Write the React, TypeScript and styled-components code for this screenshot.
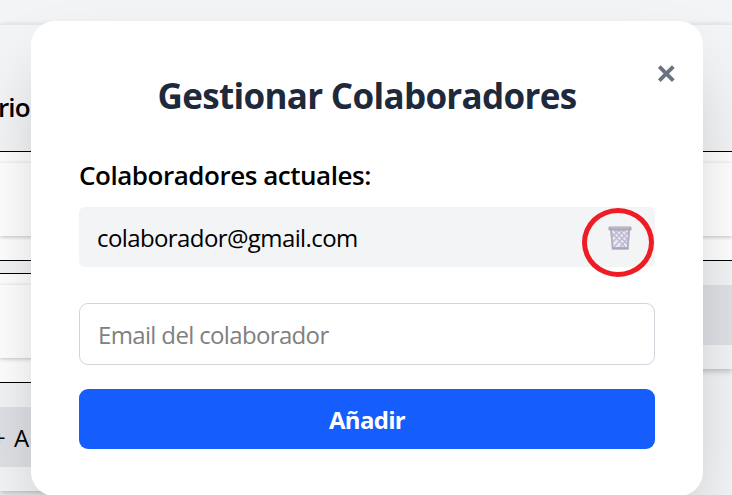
import React from "react";
import styled, { createGlobalStyle } from "styled-components";

const GlobalStyle = createGlobalStyle`
  *, *::before, *::after { box-sizing: border-box; }
  body { margin: 0; overflow: hidden; font-family: "Open Sans", "Noto Sans", sans-serif; color: #000; }
  h2, h3 { margin: 0; }
  button, input { font: inherit; }
`;

const Page = styled.div`
  position: relative;
  width: 732px;
  height: 495px;
  overflow: hidden;
  background: #f3f4f6;
`;

const Board = styled.div`
  display: flex;
  justify-content: space-between;
  height: 100%;
`;

const Column = styled.section<{ $height: number }>`
  width: 366px;
  height: ${(p) => p.$height}px;
  margin-top: 24px;
  border-top: 1px solid #e4e5e8;
  background: #f3f4f6;
  box-shadow: 0 2px 6px rgba(0, 0, 0, 0.24);
`;

const ColumnTitle = styled.h3`
  height: 126px;
  padding-top: 64px;
  margin-left: -2px;
  font-size: 26px;
  line-height: 36px;
  font-weight: 600;
  letter-spacing: -0.9px;
`;

const Slot = styled.div`
  height: 110px;
  padding: 11px 0 23px;
  border: solid #000;
  border-width: 1px 0;
  margin-bottom: 12px;
  background: #fff;
`;

const Card = styled.div`
  height: 73px;
  background: #fff;
  box-shadow: 0 1px 4px rgba(0, 0, 0, 0.24);
`;

const AddCard = styled.div<{ $gap: number }>`
  height: 60px;
  margin-top: ${(p) => p.$gap}px;
  padding-left: 14px;
  text-indent: -22px;
  word-spacing: 2px;
  background: #dfe1e6;
  font-size: 24px;
  line-height: 61px;
  white-space: pre;
`;

const Modal = styled.div`
  position: absolute;
  left: 31px;
  top: 21px;
  width: 672px;
  height: 475px;
  padding: 48px;
  border-radius: 24px;
  background: #fff;
  box-shadow: 0 37px 75px -18px rgba(0, 0, 0, 0.25);
`;

const CloseButton = styled.button`
  position: absolute;
  top: 44px;
  right: 28px;
  width: 18px;
  height: 18px;
  padding: 0;
  border: 0;
  background: none;
  svg { display: block; }
`;

const Title = styled.h2`
  height: 54px;
  color: #1e293b;
  font-size: 35px;
  line-height: 54px;
  font-weight: 700;
  text-align: center;
  white-space: nowrap;
  letter-spacing: -0.68px;
`;

const Subtitle = styled.h3`
  height: 36px;
  margin-top: 34px;
  font-size: 26px;
  line-height: 36px;
  font-weight: 600;
  white-space: nowrap;
  letter-spacing: -0.47px;
`;

const Collaborator = styled.div`
  display: flex;
  align-items: center;
  justify-content: space-between;
  height: 60px;
  margin-top: 14px;
  padding: 0 22px 0 18px;
  border-radius: 6px;
  background: #f3f4f6;
  svg { display: block; margin-top: 2px; }
`;

const Email = styled.span`
  font-size: 24px;
  line-height: 36px;
  padding-top: 1px;
  letter-spacing: -0.6px;
`;

const EmailInput = styled.input`
  display: block;
  width: 100%;
  height: 62px;
  margin-top: 36px;
  padding: 1px 18px 0;
  border: 1px solid #d1d5dc;
  border-radius: 9px;
  outline: 0;
  font-size: 24px;
  letter-spacing: -0.65px;
  &::placeholder { color: #808080; opacity: 1; }
`;

const SubmitButton = styled.button`
  display: block;
  width: 100%;
  height: 60px;
  margin-top: 24px;
  padding: 1px 0 0;
  border: 0;
  border-radius: 9px;
  background: #155dfc;
  color: #fff;
  font-size: 24px;
  font-weight: 700;
  letter-spacing: -0.7px;
`;

const Highlight = styled.div`
  position: absolute;
  left: 582px;
  top: 208px;
  width: 72px;
  height: 69px;
  border: 5px solid #ee1c25;
  border-radius: 50%;
`;

const Basket = () => (
  <svg width="26" height="26" viewBox="0 0 26 26">
    <path d="M3 3.5 4.8 24.3H21.7L23.3 3.5Z" fill="#c9c5d5" />
    <path d="M5 5 6.4 22H20L21.4 5Z" fill="#e9e6f2" />
    <path
      d="m5 8 13 14M7 5l14 15M12 5l9 10M17 5l4 5M21 7 7 22M17 5 6 17M12 5 5 12M21 13l-8 9"
      stroke="#bdb8d0"
      strokeWidth="1.2"
    />
    <path d="M4 4.5 5.7 23H20.6L22.2 4.5" fill="none" stroke="#b1adbf" strokeWidth="1.6" />
    <rect x="1.5" y="1.5" width="23" height="4" rx="1.3" fill="#aaa6b3" />
    <path d="M3 3h20" stroke="#c9c6cf" strokeWidth="1" />
    <path d="M5 23.6h16.5" stroke="#aaa5b8" strokeWidth="2" />
  </svg>
);

export default function App() {
  return (
    <>
      <GlobalStyle />
      <Page>
        <Board>
          <Column $height={467}>
            <ColumnTitle>rio</ColumnTitle>
            <Slot><Card /></Slot>
            <Slot><Card /></Slot>
            <AddCard $gap={24}>+ A</AddCard>
          </Column>
          <Column $height={345}>
            <ColumnTitle />
            <Slot><Card /></Slot>
            <AddCard $gap={24} />
          </Column>
        </Board>
        <Modal role="dialog">
          <CloseButton aria-label="Cerrar">
            <svg width="18" height="18" viewBox="0 0 18 18">
              <path d="m2.3 1.6 14 14M16.3 1.6l-14 14" stroke="#6a7282" strokeWidth="3.8" />
            </svg>
          </CloseButton>
          <Title>Gestionar Colaboradores</Title>
          <Subtitle>Colaboradores actuales:</Subtitle>
          <Collaborator>
            <Email>colaborador@gmail.com</Email>
            <Basket />
          </Collaborator>
          <EmailInput placeholder="Email del colaborador" />
          <SubmitButton>Añadir</SubmitButton>
        </Modal>
        <Highlight />
      </Page>
    </>
  );
}
